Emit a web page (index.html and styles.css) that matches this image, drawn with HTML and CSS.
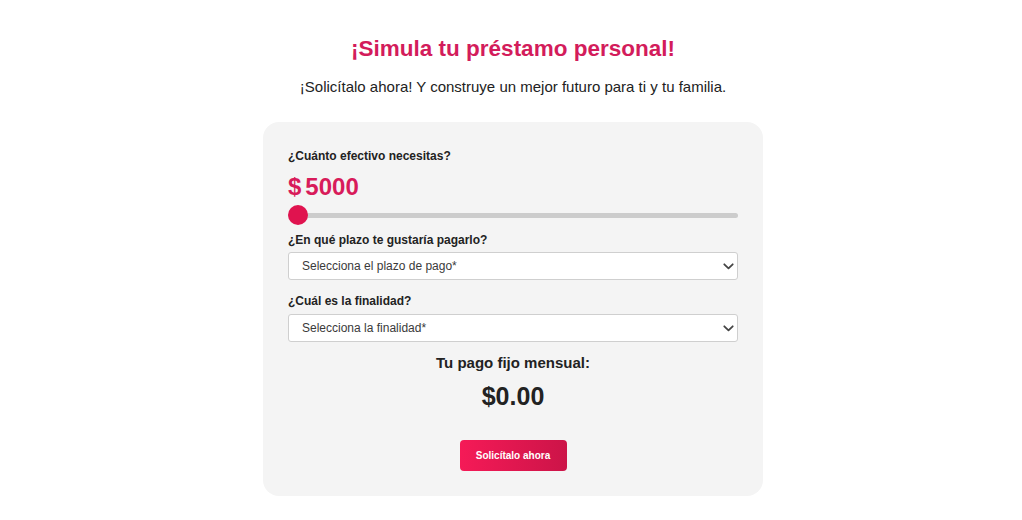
FILE: index.html
```html
<!DOCTYPE html>
<html lang="es">
<head>
<meta charset="utf-8">
<title>Simula tu préstamo personal</title>
<link rel="stylesheet" href="styles.css">
</head>
<body>
<main class="page">
  <h1 class="title">¡Simula tu préstamo personal!</h1>
  <p class="subtitle">¡Solicítalo ahora! Y construye un mejor futuro para ti y tu familia.</p>
  <section class="card">
    <label class="label">¿Cuánto efectivo necesitas?</label>
    <div class="amount">$<span class="gap"></span>5000</div>
    <div class="slider"><span class="track"></span><span class="thumb"></span></div>
    <label class="label">¿En qué plazo te gustaría pagarlo?</label>
    <div class="select">
      <span>Selecciona el plazo de pago*</span>
      <svg class="chev" width="11" height="7" viewBox="0 0 11 7"><path d="M1.3 1.3 L5.5 5.3 L9.7 1.3" fill="none" stroke="#444" stroke-width="1.8" stroke-linecap="round" stroke-linejoin="round"/></svg>
    </div>
    <label class="label label-gap">¿Cuál es la finalidad?</label>
    <div class="select select-second">
      <span>Selecciona la finalidad*</span>
      <svg class="chev" width="11" height="7" viewBox="0 0 11 7"><path d="M1.3 1.3 L5.5 5.3 L9.7 1.3" fill="none" stroke="#444" stroke-width="1.8" stroke-linecap="round" stroke-linejoin="round"/></svg>
    </div>
    <div class="result-label">Tu pago fijo mensual:</div>
    <div class="result">$0.00</div>
    <div class="actions"><button class="btn">Solicítalo ahora</button></div>
  </section>
</main>
</body>
</html>
```
FILE: styles.css
```css
* { box-sizing: border-box; }
html, body { margin: 0; padding: 0; background: #fff; }
body { font-family: "Liberation Sans", Arial, sans-serif; color: #222; }
.page { display: flex; flex-direction: column; align-items: center; padding: 35px 0 0 4px; }
.title { margin: 0; font-size: 22.5px; line-height: 28px; font-weight: bold; color: #d31c5b; }
.subtitle { margin: 14px 0 0; font-size: 15px; line-height: 20px; color: #222; }
.card { width: 500px; margin-top: 25px; background: #f4f4f4; border-radius: 16px; padding: 26px 25px 25px; display: flex; flex-direction: column; }
.label { display: block; font-size: 12px; font-weight: bold; line-height: 16px; color: #222; }
.amount { margin-top: 9px; font-size: 24px; font-weight: bold; line-height: 28px; color: #d81b5a; }
.gap { display: inline-block; width: 4px; }
.slider { position: relative; height: 22px; margin-top: 3px; }
.track { position: absolute; left: 0; right: 0; top: 9px; height: 5px; border-radius: 3px; background: #cccccc; }
.thumb { position: absolute; left: 0; top: 1px; width: 20px; height: 20px; border-radius: 50%; background: #e0134f; }
.slider + .label { margin-top: 6px; }
.select { margin-top: 4px; height: 28px; background: #fff; border: 1px solid #cfcfcf; border-radius: 3px; display: flex; align-items: center; justify-content: space-between; padding: 0 3px 0 13px; font-size: 12px; color: #3a3a3a; }
.label-gap { margin-top: 13px; }
.select-second { margin-top: 5px; }
.result-label { margin-top: 11px; text-align: center; font-size: 15px; font-weight: bold; line-height: 20px; color: #222; }
.result { margin-top: 8px; text-align: center; font-size: 25px; font-weight: bold; line-height: 30px; color: #222; }
.actions { display: flex; justify-content: center; margin-top: 29px; }
.btn { width: 107px; height: 31px; border: 0; border-radius: 4px; background: linear-gradient(90deg, #f51a57, #cc1448); color: #fff; font-family: "Liberation Sans", Arial, sans-serif; font-size: 10px; font-weight: bold; }
```
